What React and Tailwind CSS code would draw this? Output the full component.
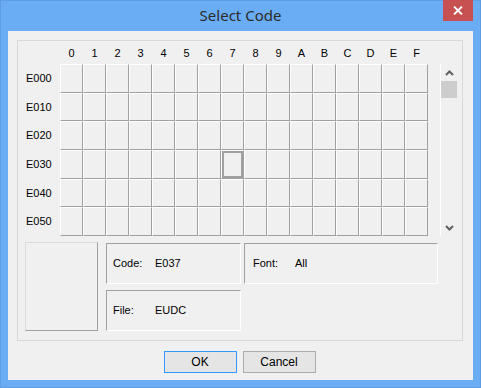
const COLS = ['0', '1', '2', '3', '4', '5', '6', '7', '8', '9', 'A', 'B', 'C', 'D', 'E', 'F']
const ROWS = ['E000', 'E010', 'E020', 'E030', 'E040', 'E050']

function Chevron({ up }) {
  return (
    <svg width="9" height="6" viewBox="0 0 9 6" className="block">
      <path
        d={up ? 'M1 5 L4.5 1.5 L8 5' : 'M1 1 L4.5 4.5 L8 1'}
        fill="none"
        stroke="#606060"
        strokeWidth="2"
      />
    </svg>
  )
}

function CodeGrid() {
  return (
    <div className="grid grid-cols-[repeat(16,23px)] grid-rows-6 h-[172px]">
      {ROWS.map((r, ri) =>
        COLS.map((c, ci) => {
          const selected = ri === 3 && ci === 7
          return (
            <div
              key={r + c}
              className="border-t border-l border-white border-r border-b border-r-[#a0a0a0] border-b-[#a0a0a0] bg-[#f0f0f0]"
            >
              {selected && <div className="w-full h-full border-2 border-[#a0a0a0]" />}
            </div>
          )
        })
      )}
    </div>
  )
}

export default function App() {
  return (
    <div
      className="w-[481px] h-[388px] flex flex-col bg-[#6aadf5] border border-[#5d9de3] px-[7px] pb-[7px] text-black"
      style={{ fontFamily: '"Liberation Sans", Arial, sans-serif' }}
    >
      {/* Title bar */}
      <div className="relative h-[30px] flex items-center justify-center">
        <span className="text-[15px] text-[#2b2b2b] -mt-[1px]" style={{ fontFamily: '"Noto Sans", sans-serif' }}>
          Select Code
        </span>
        <div className="absolute right-[0px] top-[-1px] w-[30px] h-[21px] bg-[#c75050] flex items-center justify-center">
          <svg width="10" height="9" viewBox="0 0 10 9">
            <path d="M1 0.5 L9 8.5 M9 0.5 L1 8.5" stroke="white" strokeWidth="1.8" />
          </svg>
        </div>
      </div>

      {/* Client area */}
      <div className="flex-1 bg-[#f0f0f0] flex flex-col pt-[9px] pl-[9px] pr-[10px]">
        <div className="h-[301px] border border-[#d9d9d9] flex flex-col text-[11px]">
          {/* Column headers */}
          <div className="h-[23px] flex pl-[42px] items-center">
            {COLS.map((c) => (
              <div key={c} className="w-[23px] text-center leading-none pt-[2px]">
                {c}
              </div>
            ))}
          </div>

          {/* Grid row */}
          <div className="flex">
            <div className="w-[42px] h-[172px] grid grid-rows-6 pl-[8px]">
              {ROWS.map((r) => (
                <div key={r} className="flex items-center">
                  {r}
                </div>
              ))}
            </div>
            <CodeGrid />
            <div className="ml-[12px] w-[17px] h-[172px] border-l border-white flex flex-col">
              <div className="h-[17px] flex items-center justify-center">
                <Chevron up />
              </div>
              <div className="h-[17px] bg-[#cdcdcd]" />
              <div className="flex-1" />
              <div className="h-[17px] flex items-center justify-center">
                <Chevron />
              </div>
            </div>
          </div>

          {/* Info section */}
          <div className="flex mt-[6px] pl-[7px]">
            <div className="w-[73px] h-[89px] border border-t-[#dcdcdc] border-l-[#dcdcdc] border-r-[#a0a0a0] border-b-[#a0a0a0]" />
            <div className="ml-[8px] mt-px flex flex-col gap-[6px]">
              <div className="w-[135px] h-[41px] border border-t-[#a0a0a0] border-l-[#a0a0a0] border-r-white border-b-white flex items-center pl-[6px]">
                <span className="w-[42px]">Code:</span>
                <span>E037</span>
              </div>
              <div className="w-[135px] h-[41px] border border-t-[#a0a0a0] border-l-[#a0a0a0] border-r-white border-b-white flex items-center pl-[6px]">
                <span className="w-[42px]">File:</span>
                <span>EUDC</span>
              </div>
            </div>
            <div className="ml-[3px] mt-px w-[194px] h-[41px] border border-t-[#a0a0a0] border-l-[#a0a0a0] border-r-white border-b-white flex items-center pl-[8px]">
              <span className="w-[42px]">Font:</span>
              <span>All</span>
            </div>
          </div>
        </div>

        {/* Buttons */}
        <div className="mt-[10px] flex justify-center gap-[6px] text-[12px] pr-[1px]">
          <button className="w-[73px] h-[22px] border border-[#3399ff] bg-[#e5e5e5] flex items-center justify-center">
            OK
          </button>
          <button className="w-[73px] h-[22px] border border-[#acacac] bg-[#e5e5e5] flex items-center justify-center">
            Cancel
          </button>
        </div>
      </div>
    </div>
  )
}
